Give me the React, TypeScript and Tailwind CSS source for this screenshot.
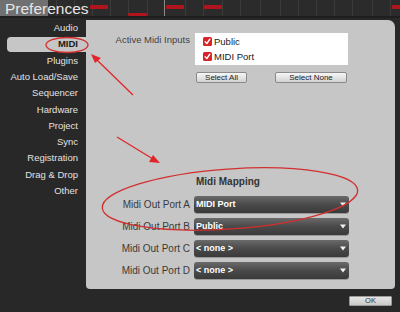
import React from "react";

const sidebar = [
  "Audio",
  "MIDI",
  "Plugins",
  "Auto Load/Save",
  "Sequencer",
  "Hardware",
  "Project",
  "Sync",
  "Registration",
  "Drag & Drop",
  "Other",
];

function Check() {
  return (
    <span className="w-[9px] h-[9px] rounded-[1.5px] bg-[#d8232a] flex items-center justify-center shrink-0">
      <svg width="7" height="7" viewBox="0 0 7 7">
        <path d="M1.2 3.8 L2.9 5.5 L5.8 1.2" stroke="#fff" strokeWidth="1.4" fill="none" strokeLinecap="round" strokeLinejoin="round" />
      </svg>
    </span>
  );
}

function Dropdown({ value }: { value: string }) {
  return (
    <div className="w-[155px] h-[17px] rounded-[3px] bg-gradient-to-b from-[#6a6a6a] via-[#4a4a4a] to-[#3a3a3a] flex items-center justify-between pl-[2px] pr-[3px] shadow-[0_1px_0_#9a9a9a]">
      <span className="text-white font-bold text-[9px] leading-none">{value}</span>
      <svg width="6" height="5" viewBox="0 0 6 5">
        <path d="M0 0.5 H6 L3 4.5 Z" fill="#f2f2f2" />
      </svg>
    </div>
  );
}

function PortRow({ label, value }: { label: string; value: string }) {
  return (
    <div className="flex items-center h-[17px]">
      <div className="w-[104px] text-right pr-[0px] text-[10px] text-[#3a3a3a] leading-none">{label}</div>
      <div className="ml-[4px]">
        <Dropdown value={value} />
      </div>
    </div>
  );
}

function TopStrip() {
  const lines = [18, 36, 56, 74, 92, 110, 128, 147, 164, 185, 203, 222, 240, 260, 280, 298, 316, 334, 352, 372, 390];
  return (
    <svg width="400" height="18" viewBox="0 0 400 18" className="block">
      <rect width="400" height="18" fill="#2b2b2b" />
      <rect y="16" width="400" height="2" fill="#1e1e1e" />
      {lines.map((x) => (
        <rect key={x} x={x} y="0" width="1" height="16" fill={x === 164 ? "#8a8a8a" : "#3b3b3b"} />
      ))}
      <rect x="0" y="0" width="48" height="16" fill="#707070" />
      <rect x="90" y="5" width="18" height="4" rx="1" fill="#b0141c" />
      <rect x="128" y="13" width="19" height="3" rx="1" fill="#b0141c" />
      <rect x="166" y="5" width="18" height="4" rx="1" fill="#b0141c" />
      <rect x="204" y="5" width="18" height="4" rx="1" fill="#b0141c" />
      <rect x="392" y="5" width="10" height="4" rx="1" fill="#b0141c" />
    </svg>
  );
}

export default function App() {
  return (
    <div
      className="relative w-[400px] h-[312px] bg-[#282828] overflow-hidden flex flex-col"
      style={{ fontFamily: '"Liberation Sans", Arial, sans-serif' }}
    >
      <div className="relative h-[18px]">
        <TopStrip />
        <div className="absolute left-[5px] top-[0px] text-[15.5px] leading-[17px] text-[#e6e6e6]">Preferences</div>
      </div>

      <div className="flex pt-[2px]">
        <div className="w-[86px] flex flex-col">
          {sidebar.map((s) =>
            s === "MIDI" ? (
              <div key={s} className="h-[16.3px] flex items-center pl-[7px]">
                <div className="flex-1 h-[15px] bg-[#c6c6c6] rounded-l-[4px] flex items-center justify-end pr-[8px] text-[9.5px] font-bold text-[#1a1a1a]">
                  {s}
                </div>
              </div>
            ) : (
              <div key={s} className="h-[16.3px] flex items-center justify-end pr-[8px] text-[9.5px] text-[#e2e2e2]">
                {s}
              </div>
            )
          )}
        </div>

        <div className="w-[309px] h-[269px] bg-[#c6c6c6] rounded-tr-[7px] rounded-b-[4px] flex flex-col pt-[13px]">
          <div className="flex">
            <div className="w-[104px] text-right text-[9.5px] text-[#444] pt-[1px] leading-[11px]">Active Midi Inputs</div>
            <div className="ml-[5px] w-[153px] h-[32px] bg-white flex flex-col pl-[8px] pt-[4px] gap-[6px]">
              <div className="flex items-center gap-[2px] h-[9px]">
                <Check />
                <span className="text-[9.5px] text-[#1a1a1a] leading-none">Public</span>
              </div>
              <div className="flex items-center gap-[2px] h-[9px]">
                <Check />
                <span className="text-[9.5px] text-[#1a1a1a] leading-none">MIDI Port</span>
              </div>
            </div>
          </div>

          <div className="flex mt-[7px] pl-[110px] gap-[28px]">
            <div className="w-[51px] h-[11px] border border-[#8a8a8a] rounded-[2px] bg-gradient-to-b from-[#f6f6f6] to-[#d2d2d2] flex items-center justify-center text-[8px] text-[#222] leading-none">
              Select All
            </div>
            <div className="w-[72px] h-[11px] border border-[#8a8a8a] rounded-[2px] bg-gradient-to-b from-[#f6f6f6] to-[#d2d2d2] flex items-center justify-center text-[8px] text-[#222] leading-none">
              Select None
            </div>
          </div>

          <div className="mt-[93px] pl-[110px] text-[10px] font-bold text-[#333] leading-[12px]">Midi Mapping</div>

          <div className="mt-[8px] flex flex-col gap-[5px]">
            <PortRow label="Midi Out Port A" value="MIDI Port" />
            <PortRow label="Midi Out Port B" value="Public" />
            <PortRow label="Midi Out Port C" value="< none >" />
            <PortRow label="Midi Out Port D" value="< none >" />
          </div>
        </div>
      </div>

      <div className="flex justify-end pr-[8px] pt-[7px]">
        <div className="w-[43px] h-[10px] bg-gradient-to-b from-[#e6e6e6] to-[#c8c8c8] border border-[#9a9a9a] rounded-[1px] flex items-center justify-center text-[7.5px] text-[#333] leading-none">
          OK
        </div>
      </div>

      <svg className="absolute left-0 top-0 pointer-events-none" width="400" height="312" viewBox="0 0 400 312">
        <ellipse cx="67" cy="45" rx="21" ry="7.5" fill="none" stroke="#d32f2f" strokeWidth="1.3" />
        <line x1="133" y1="95" x2="97" y2="60" stroke="#e0262b" strokeWidth="1.3" />
        <path d="M91 54 L101 58 L95 63 Z" fill="#e0262b" />
        <line x1="117" y1="137" x2="153" y2="159" stroke="#e0262b" strokeWidth="1.3" />
        <path d="M160 163 L149 162 L153 155 Z" fill="#e0262b" />
        <ellipse cx="230" cy="199" rx="128" ry="30" transform="rotate(-4 230 199)" fill="none" stroke="#d32f2f" strokeWidth="1.3" />
      </svg>
    </div>
  );
}
